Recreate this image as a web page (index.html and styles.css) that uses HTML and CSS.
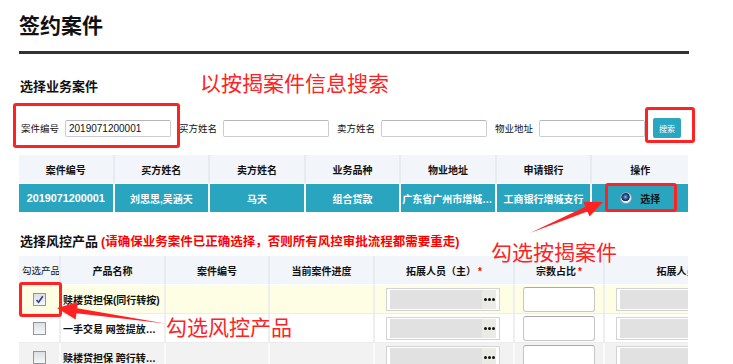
FILE: index.html
```html
<!DOCTYPE html>
<html lang="zh-CN">
<head>
  <meta charset="UTF-8">
  <title>签约案件</title>
  <link rel="stylesheet" href="styles.css">
</head>
<body>

<div class="page">
  <h1 class="page-title">签约案件</h1>

  <h2 class="section-title">选择业务案件</h2>
  <div class="search-bar">
    <label class="search-label">案件编号</label>
    <input class="text-input" type="text" value="2019071200001">
    <label class="search-label">买方姓名</label>
    <input class="text-input" type="text">
    <label class="search-label">卖方姓名</label>
    <input class="text-input" type="text">
    <label class="search-label">物业地址</label>
    <input class="text-input" type="text">
    <button class="btn-search">搜索</button>
  </div>

  <table class="grid case-grid">
    <thead>
      <tr>
        <th>案件编号</th>
        <th>买方姓名</th>
        <th>卖方姓名</th>
        <th>业务品种</th>
        <th>物业地址</th>
        <th>申请银行</th>
        <th>操作</th>
      </tr>
    </thead>
    <tbody>
      <tr class="selected">
        <td class="num">2019071200001</td>
        <td>刘思思,吴涵天</td>
        <td>马天</td>
        <td>组合贷款</td>
        <td>广东省广州市增城区荔城街道</td>
        <td>工商银行增城支行</td>
        <td><span class="radio"></span><span class="op-text">选择</span></td>
      </tr>
    </tbody>
  </table>

  <h2 class="section-title section-gap">选择风控产品<span class="warn">(请确保业务案件已正确选择，否则所有风控审批流程都需要重走)</span></h2>

  <div class="grid-scroll">
    <table class="grid product-grid">
      <colgroup>
        <col style="width:42px">
        <col style="width:105px">
        <col style="width:104px">
        <col style="width:105px">
        <col style="width:140px">
        <col style="width:90px">
        <col style="width:175px">
      </colgroup>
      <thead>
        <tr>
          <th class="th-check">勾选产品</th>
          <th>产品名称</th>
          <th>案件编号</th>
          <th>当前案件进度</th>
          <th>拓展人员（主）<span class="req">*</span></th>
          <th>宗数占比<span class="req">*</span></th>
          <th>拓展人员（副）</th>
        </tr>
      </thead>
      <tbody>
        <tr class="row-active">
          <td class="cell-check"><span class="checkbox checked"><svg viewBox="0 0 11 11" width="11" height="11"><path d="M2.5 6 L4.6 8.3 L8.8 2.2" fill="none" stroke="#2b3f8c" stroke-width="1.6"/></svg></span></td>
          <td class="cell-name">赎楼贷担保(同行转按)</td>
          <td></td>
          <td></td>
          <td class="cell-picker"><span class="picker"><span class="picker-field"></span><span class="picker-btn"><i></i><i></i><i></i></span></span></td>
          <td class="cell-ratio"><span class="ratio-input"></span></td>
          <td class="cell-picker"><span class="picker"><span class="picker-field"></span><span class="picker-btn"><i></i><i></i><i></i></span></span></td>
        </tr>
        <tr>
          <td class="cell-check"><span class="checkbox"></span></td>
          <td class="cell-name">一手交易 网签提放款担保</td>
          <td></td>
          <td></td>
          <td class="cell-picker"><span class="picker"><span class="picker-field"></span><span class="picker-btn"><i></i><i></i><i></i></span></span></td>
          <td class="cell-ratio"><span class="ratio-input"></span></td>
          <td class="cell-picker"><span class="picker"><span class="picker-field"></span><span class="picker-btn"><i></i><i></i><i></i></span></span></td>
        </tr>
        <tr class="row-alt">
          <td class="cell-check"><span class="checkbox"></span></td>
          <td class="cell-name">赎楼贷担保 跨行转按担保</td>
          <td></td>
          <td></td>
          <td class="cell-picker"><span class="picker"><span class="picker-field"></span><span class="picker-btn"><i></i><i></i><i></i></span></span></td>
          <td class="cell-ratio"><span class="ratio-input"></span></td>
          <td class="cell-picker"><span class="picker"><span class="picker-field"></span><span class="picker-btn"><i></i><i></i><i></i></span></span></td>
        </tr>
      </tbody>
    </table>
  </div>
</div>

<!-- annotation layer -->
<div class="note note-search">以按揭案件信息搜索</div>
<div class="note note-case">勾选按揭案件</div>
<div class="note note-product">勾选风控产品</div>

<div class="mark mark-code"></div>
<div class="mark mark-btn"></div>
<div class="mark mark-select"></div>
<div class="mark mark-check"></div>

<svg class="arrows" width="733" height="364" viewBox="0 0 733 364">
  <polygon points="530,233 585.4,206.8 583.2,201.8 603,202 589.6,216.4 587.4,211.4" fill="#f22"/>
  <polygon points="165,323.5 77.1,308.3 77.9,302 57,308 75.6,319.6 76.5,313.3" fill="#f22"/>
</svg>

</body>
</html>
```

FILE: styles.css
```css
/* Global Styles */
body {
  margin: 0;
  position: relative;
  width: 733px;
  height: 364px;
  overflow: hidden;
  background: #fff;
  font-family: "Liberation Sans", "Noto Sans CJK SC", sans-serif;
  color: #222;
}

.page {
  padding-left: 19px;
  width: 670px;
}

.page-title {
  margin: 0;
  padding: 12px 0 11px;
  font-size: 21px;
  line-height: 28px;
  font-weight: 700;
  color: #111;
  border-bottom: 3px solid #333;
}

.section-title {
  margin: 23px 0 0;
  padding-left: 1px;
  font-size: 13px;
  line-height: 20px;
  font-weight: 700;
  color: #111;
}

.section-gap {
  margin-top: 20px;
}

.warn {
  margin-left: 3px;
  font-size: 12.5px;
  color: #f00;
}

/* search bar */
.search-bar {
  display: flex;
  align-items: center;
  height: 20px;
  margin-top: 21px;
}

.search-label {
  width: 38px;
  margin-right: 6px;
  font-size: 9.5px;
  white-space: nowrap;
  color: #111;
}

.search-label:first-child {
  margin-left: 2px;
}

.text-input {
  box-sizing: border-box;
  width: 106px;
  height: 17px;
  margin: 0 8px 0 0;
  padding: 0 3px;
  border: 1px solid #c9ccd2;
  border-top-color: #b3b6bb;
  border-radius: 2px;
  font-family: "Liberation Sans", sans-serif;
  font-size: 10px;
  color: #111;
  background: #fff;
}

.btn-search {
  width: 28px;
  height: 20px;
  padding: 0;
  border: none;
  border-radius: 2px;
  background-color: #2ba6c1;
  color: #fff;
  font-family: "Noto Sans CJK SC", sans-serif;
  font-size: 8px;
  cursor: pointer;
}

/* tables */
.grid {
  border-collapse: separate;
  border-spacing: 0;
  table-layout: fixed;
}

.grid th,
.grid td {
  padding: 0;
  text-align: center;
  white-space: nowrap;
  overflow: hidden;
  text-overflow: ellipsis;
  font-size: 10px;
}

.grid th {
  height: 28px;
  font-weight: 700;
  color: #111;
  background: #f2f5fa;
  border-right: 2px solid #e7eaef;
  border-bottom: 1px solid #fff;
}

.case-grid {
  width: 669px;
  margin-top: 17px;
}

.case-grid th:last-child,
.case-grid td:last-child {
  border-right: none;
}

.case-grid td {
  height: 28px;
  padding: 0 1px;
  font-weight: 700;
  color: #fff;
  background: #2aa5bf;
  border-right: 2px solid #fff;
}

.case-grid td.num {
  font-size: 10.8px;
}

.radio {
  display: inline-block;
  width: 10px;
  height: 10px;
  margin-right: 8px;
  vertical-align: -1px;
  border-radius: 50%;
  border: 1px solid #8ea0b2;
  background: radial-gradient(circle at 45% 40%, #8cc0ee 0, #2b5d9c 25%, #0f2f5e 48%, #eef1f4 55%, #ffffff 100%);
}

.op-text {
  color: #111;
}

/* product table */
.grid-scroll {
  width: 669px;
  margin-top: 4px;
  overflow: hidden;
}

.product-grid {
  width: 761px;
}

.product-grid .th-check {
  padding-left: 3px;
  text-align: left;
  text-overflow: clip;
  font-size: 9.5px;
  font-weight: 400;
}

.req {
  margin-left: 2px;
  color: #f00;
}

.product-grid td {
  height: 28px;
  background: #fff;
  border-right: 2px solid #eeeeee;
  border-bottom: 1px solid #ececec;
}

.product-grid .row-active td {
  background: #fefee4;
}

.product-grid .row-alt td {
  background: #f2f2f2;
  border-right-color: #fafafa;
}

.cell-name {
  padding-left: 2px !important;
  text-align: left !important;
  font-weight: 700;
  color: #111;
}

.checkbox {
  box-sizing: border-box;
  display: inline-flex;
  align-items: center;
  justify-content: center;
  width: 13px;
  height: 13px;
  vertical-align: middle;
  border: 1px solid #8d97a3;
  background: linear-gradient(#dedfe2, #f7f7f8);
}

.cell-picker {
  text-align: left !important;
  padding-left: 11px !important;
}

.picker {
  box-sizing: border-box;
  display: inline-flex;
  width: 114px;
  height: 23px;
  padding: 1px 3px;
  vertical-align: middle;
  border: 1px solid #d3d3d3;
  background: #fff;
}

.picker-field {
  flex: 1;
  background: #e1e1e1;
}

.picker-btn {
  display: flex;
  align-items: center;
  justify-content: center;
  gap: 1px;
  width: 14px;
  background: #ebebe5;
}

.picker-btn i {
  width: 3px;
  height: 3px;
  border-radius: 50%;
  background: #111;
}

.cell-ratio {
  text-align: left !important;
  padding-left: 8px !important;
}

.ratio-input {
  box-sizing: border-box;
  display: inline-block;
  width: 72px;
  height: 25px;
  vertical-align: middle;
  border: 1px solid #c6c6c6;
  border-top-color: #a9a9a9;
  border-radius: 3px;
  background: #fff;
}

/* annotation layer */
.note {
  position: absolute;
  font-family: "Noto Sans CJK SC", sans-serif;
  font-size: 21px;
  line-height: 21px;
  font-weight: 400;
  color: #f22;
  white-space: nowrap;
}

.note-search {
  left: 200px;
  top: 72px;
}

.note-case {
  left: 491px;
  top: 241px;
}

.note-product {
  left: 166px;
  top: 316px;
}

.mark {
  position: absolute;
  box-sizing: border-box;
  border: 3px solid #f22;
  border-radius: 3px;
}

.mark-code {
  left: 13px;
  top: 103px;
  width: 167px;
  height: 45px;
}

.mark-btn {
  left: 645px;
  top: 107px;
  width: 50px;
  height: 36px;
}

.mark-select {
  left: 605px;
  top: 183px;
  width: 72px;
  height: 29px;
}

.mark-check {
  left: 19px;
  top: 282px;
  width: 43px;
  height: 35px;
}

.arrows {
  position: absolute;
  left: 0;
  top: 0;
  pointer-events: none;
}
```
